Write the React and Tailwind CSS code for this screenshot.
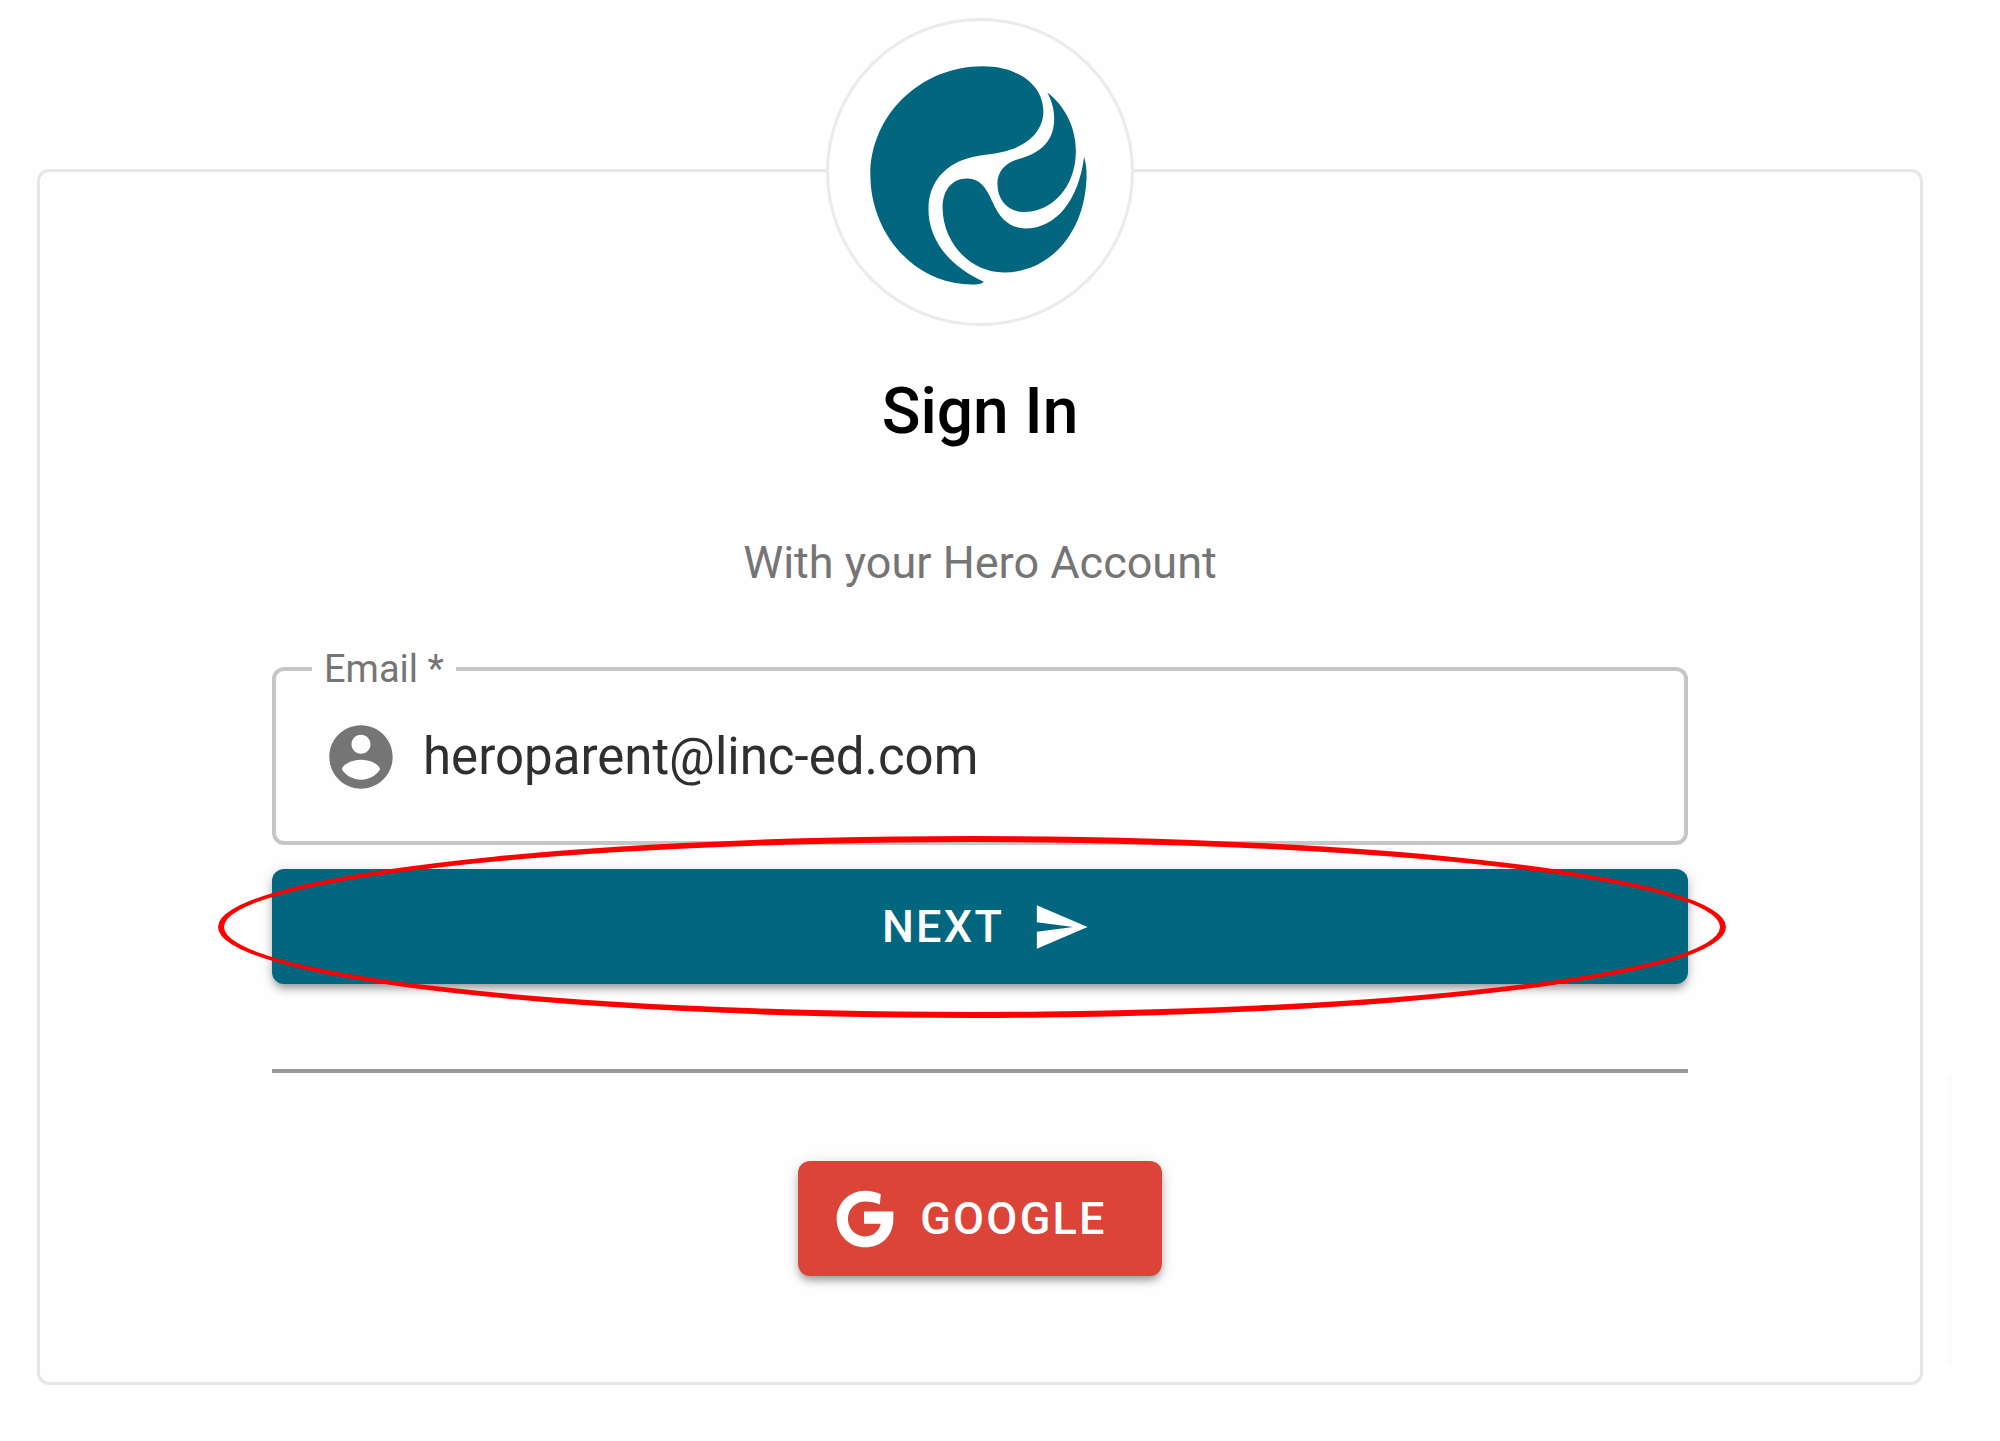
import React, { useState } from 'react';

function HeroLogo() {
  return (
    <svg className="h-full w-full" viewBox="52 52 920 920" fill="#01667e" aria-hidden="true">
      <path d="M520 190C625 190 705 245 705 327C705 395 645 437 580 451C550 458 520 459 490 466C410 484 355 540 355 625C355 715 412 795 523 846C520 855 485 856 460 853C300 840 178 690 178 520C178 340 330 190 520 190Z" />
      <path d="M717 270C770 310 804 375 804 448C804 560 730 634 645 634C597 634 565 597 565 548C565 510 590 485 625 474C700 455 738 415 738 350C738 320 730 295 717 270Z" />
      <path d="M829 466C838 495 837 520 836 540C826 710 715 818 585 818C480 818 398 725 398 620C398 568 427 532 472 532C516 532 534 567 551 605C572 655 605 684 650 684C745 684 813 595 829 466Z" />
    </svg>
  );
}

function AccountIcon() {
  return (
    <svg className="size-[76px] shrink-0" viewBox="0 0 24 24" fill="#757575" aria-hidden="true">
      <path d="M12 2C6.48 2 2 6.48 2 12s4.48 10 10 10 10-4.48 10-10S17.52 2 12 2zm0 3c1.66 0 3 1.34 3 3s-1.34 3-3 3-3-1.34-3-3 1.34-3 3-3zm0 14.2c-2.5 0-4.71-1.28-6-3.22.03-1.99 4-3.08 6-3.08 1.99 0 5.97 1.09 6 3.08-1.29 1.94-3.5 3.22-6 3.22z" />
    </svg>
  );
}

function SendIcon() {
  return (
    <svg className="size-[58px]" viewBox="0 0 24 24" fill="currentColor" aria-hidden="true">
      <path d="M2.01 21L23 12 2.01 3 2 10l15 2-15 2z" />
    </svg>
  );
}

function GoogleIcon() {
  return (
    <svg className="size-[58px]" viewBox="165 145 180 180" fill="currentColor" aria-hidden="true">
      <path d="M304 158C289 151 273 147 255 147C206 147 167 186 167 235C167 284 206 323 255 323C306 323 343 287 343 235V212H252V250H304C298 274 280 289 255 289C225 289 202 265 202 235C202 205 225 181 255 181C272 181 287 184 301 190Z" />
    </svg>
  );
}

const buttonClass =
  'flex items-center justify-center rounded-[12px] text-[45px] font-medium leading-[58px] tracking-wider text-white uppercase shadow-[0_6px_8px_-2px_rgba(0,0,0,0.35),0_2px_14px_rgba(0,0,0,0.14)]';

export default function App() {
  const [email, setEmail] = useState('heroparent@linc-ed.com');

  return (
    <div className="flex min-h-screen items-start bg-[#fefefe] pt-[169px] pr-[48px] pl-[37px] font-['Roboto',sans-serif]">
      <main className="flex min-w-0 flex-1 flex-col items-center rounded-[12px] border-[3px] border-[#e6e6e6] px-[232px] pb-[106px]">
        <div className="-mt-[154px] size-[308px] rounded-full border-[3px] border-[#ebebeb] bg-white">
          <HeroLogo />
        </div>

        <h1 className="mt-[46px] text-[64px] leading-[80px] font-medium text-black">Sign In</h1>
        <p className="mt-[79px] text-[45px] leading-[64px] text-[#757575]">With your Hero Account</p>

        <form className="mt-[50px] flex w-full flex-col" onSubmit={(e) => e.preventDefault()}>
          <fieldset className="rounded-[12px] border-[4px] border-[#c6c6c6] px-[36px] pb-[46px]">
            <legend className="px-[12px] text-[38px] leading-[48px] text-[#757575]">
              <label htmlFor="email">Email *</label>
            </legend>
            <div className="mt-[26px] flex items-center gap-[24px] pl-[11px]">
              <AccountIcon />
              <input
                id="email"
                type="email"
                required
                value={email}
                onChange={(e) => setEmail(e.target.value)}
                className="min-w-0 flex-1 bg-transparent text-[51px] leading-[64px] text-[#2f2f2f] outline-none"
              />
            </div>
          </fieldset>

          <div className="relative mt-[24px]">
            <button type="submit" className={`${buttonClass} h-[115px] w-full gap-[28px] bg-[#01667e] pl-[12px]`}>
              Next
              <SendIcon />
            </button>
            {/* highlight ring around the next step */}
            <div className="pointer-events-none absolute -top-[33px] -right-[38px] -bottom-[34px] -left-[54px] rounded-[50%] border-[6px] border-[#ff0000]" />
          </div>
        </form>

        <hr className="mt-[85px] w-full border-t-[4px] border-[#989898]" />

        <button type="button" className={`${buttonClass} mt-[88px] h-[115px] gap-[26px] bg-[#db4437] pr-[55px] pl-[38px]`}>
          <GoogleIcon />
          Google
        </button>
      </main>

      <div className="mb-[76px] ml-[25px] h-[290px] w-[4px] self-end bg-[#fbfbfb]" />
    </div>
  );
}
